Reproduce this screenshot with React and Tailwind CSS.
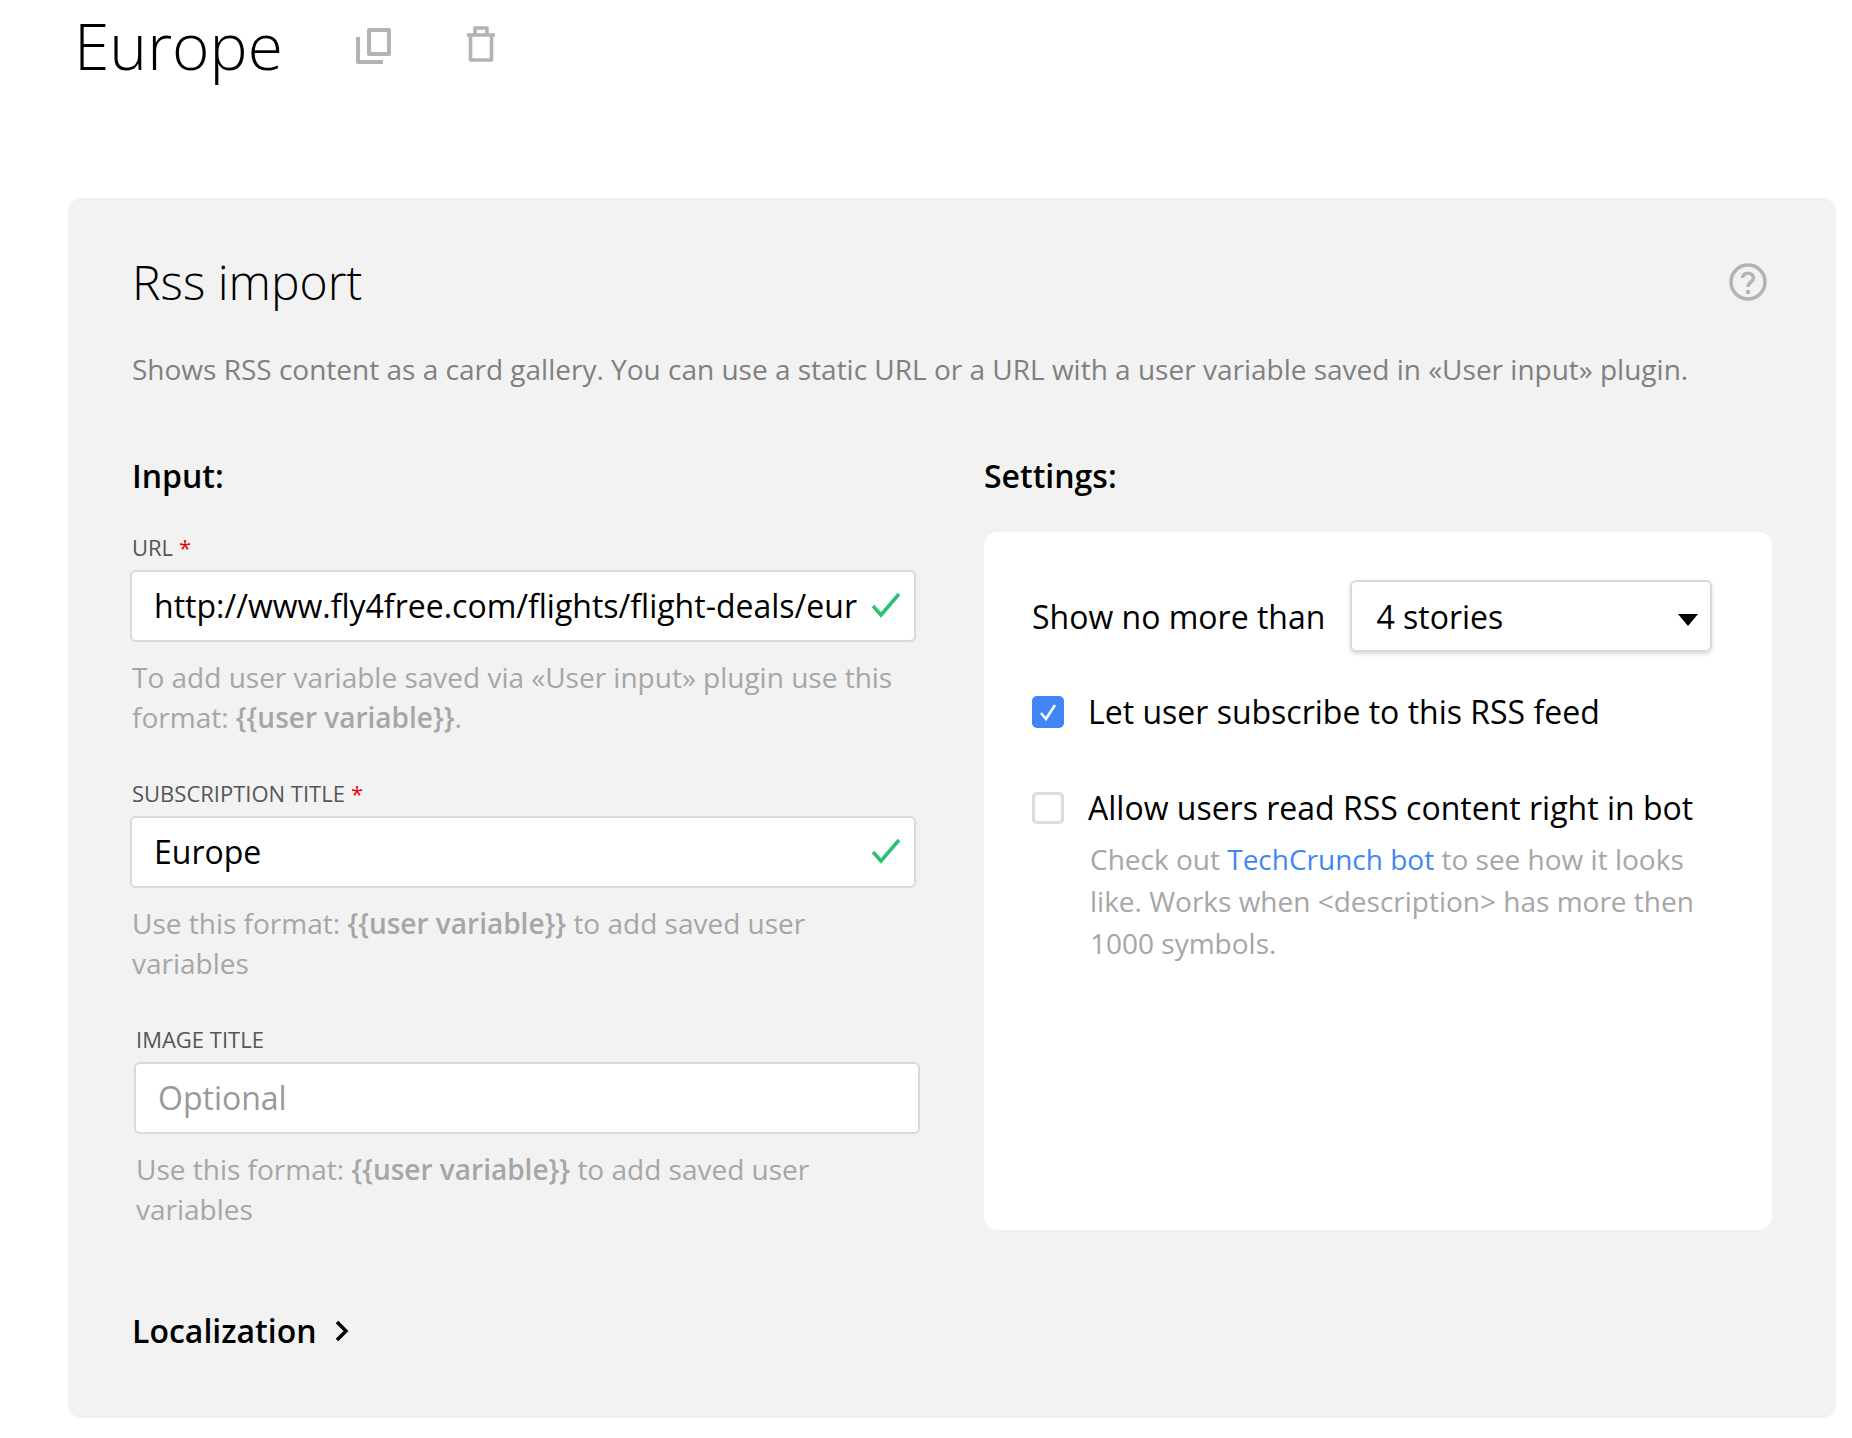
import React from 'react';

const font = "font-['Open_Sans',sans-serif]";

const GreenCheck = () => (
  <svg width="30" height="26" viewBox="0 0 30 26" fill="none" className="shrink-0 -mt-[3px]">
    <path d="M2 14 L10 23 L28 2" stroke="#2ac275" strokeWidth="3.6" />
  </svg>
);

const Field = ({ label, required, value, placeholder, check, children, className = '' }) => (
  <div className={className}>
    <div className="h-[28px] text-[22px] leading-[28px] text-[#555555]">
      {label}
      {required && <span className="ml-[6px] text-[#f00000]">*</span>}
    </div>
    <div className="mt-[9px] -ml-[2px] mr-[1px] h-[72px] flex items-center justify-between pl-[22px] pr-[13px] bg-white border-2 border-[#d9d9d9] rounded-[6px] text-[32px]">
      {value ? <span className="text-black whitespace-nowrap">{value}</span> : <span className="text-[#999999]">{placeholder}</span>}
      {check && <GreenCheck />}
    </div>
    <p className="mt-[15px] text-[28px] leading-[40px] text-[#a6a6a6]">{children}</p>
  </div>
);

const App = () => {
  return (
    <div className={`${font} w-[1852px] h-[1438px] bg-white overflow-hidden`}>
      {/* Header */}
      <div className="h-[198px] pl-[74px] flex items-start">
        <h1 className="mt-[6px] text-[64px] leading-[80px] font-light text-black">Europe</h1>
        <div className="ml-[73px] mt-[26px] flex items-start gap-[76px]">
          <svg width="35" height="36" viewBox="0 0 35 36" fill="none" stroke="#b3b3b3" strokeWidth="4" strokeLinejoin="round" className="mt-[2px]">
            <rect x="13" y="2" width="20" height="24" />
            <path d="M2 9 V34 H27" />
          </svg>
          <svg width="28" height="36" viewBox="0 0 28 36" fill="none" stroke="#b3b3b3" strokeWidth="3.6" strokeLinejoin="round">
            <path d="M0 9 H28" />
            <path d="M8 8 V2 H20 V8" />
            <path d="M3.5 9 V34 H24.5 V9" />
          </svg>
        </div>
      </div>

      {/* Panel */}
      <div className="ml-[68px] w-[1768px] h-[1220px] bg-[#f2f2f2] rounded-[14px] pl-[64px] pt-[50px]">
        <div className="flex items-center justify-between w-[1635px]">
          <h2 className="text-[48px] leading-[68px] font-light text-black">Rss import</h2>
          <svg width="38" height="38" viewBox="0 0 38 38" fill="none">
            <circle cx="19" cy="19" r="17" stroke="#b3b3b3" strokeWidth="3.5" />
            <path d="M13.5 15 C13.5 8.5 24.5 8.5 24.5 15 C24.5 19 19 19 19 24" stroke="#b3b3b3" strokeWidth="3.5" />
            <circle cx="19" cy="29" r="2.2" fill="#b3b3b3" />
          </svg>
        </div>
        <p className="mt-[33px] text-[28px] leading-[40px] text-[#808080] whitespace-nowrap">
          Shows RSS content as a card gallery. You can use a static URL or a URL with a user variable saved in «User input» plugin.
        </p>

        <div className="mt-[65px] flex">
          {/* Input column */}
          <div className="w-[852px]">
            <h3 className="text-[32px] leading-[44px] font-semibold text-black">Input:</h3>
            <Field className="mt-[35px] w-[785px]" label="URL" required value="http://www.fly4free.com/flights/flight-deals/eur" check>
              To add user variable saved via «User input» plugin use this format: <b className="font-semibold">{'{{user variable}}'}</b>.
            </Field>
            <Field className="mt-[42px] w-[785px]" label="SUBSCRIPTION TITLE" required value="Europe" check>
              Use this format: <b className="font-semibold">{'{{user variable}}'}</b> to add saved user variables
            </Field>
            <Field className="mt-[42px] ml-[4px] w-[785px]" label="IMAGE TITLE" placeholder="Optional">
              Use this format: <b className="font-semibold">{'{{user variable}}'}</b> to add saved user variables
            </Field>
            <div className="mt-[80px] flex items-center gap-[18px] text-[32px] leading-[44px] font-semibold text-black">
              Localization
              <svg width="14" height="22" viewBox="0 0 14 22" fill="none" stroke="black" strokeWidth="3.5">
                <path d="M2 2 L11 11 L2 20" />
              </svg>
            </div>
          </div>

          {/* Settings column */}
          <div className="w-[788px]">
            <h3 className="text-[32px] leading-[44px] font-semibold text-black">Settings:</h3>
            <div className="mt-[34px] h-[698px] bg-white rounded-[14px] pl-[48px] pt-[48px]">
              <div className="flex items-center">
                <span className="text-[32px] leading-[44px] text-black pt-[2px]">Show no more than</span>
                <div className="ml-[25px] w-[362px] h-[72px] flex items-center justify-between pl-[24px] pr-[12px] border-2 border-[#d9d9d9] rounded-[6px] shadow-[0_2px_4px_rgba(0,0,0,0.15)] text-[32px] text-black">
                  <span className="pt-[1px]">4 stories</span>
                  <svg width="20" height="12" viewBox="0 0 20 12" fill="black" className="mt-[7px]"><path d="M0 0 H20 L10 12 Z" /></svg>
                </div>
              </div>
              <div className="mt-[38px] flex items-center gap-[24px]">
                <span className="w-[32px] h-[32px] bg-[#3f87f5] rounded-[5px] flex items-center justify-center">
                  <svg width="18" height="18" viewBox="0 0 18 18" fill="none" stroke="white" strokeWidth="2.5">
                    <path d="M2 10 L7 16 L16 2" />
                  </svg>
                </span>
                <span className="text-[32px] leading-[44px] text-black">Let user subscribe to this RSS feed</span>
              </div>
              <div className="mt-[52px] flex items-center gap-[24px]">
                <span className="w-[32px] h-[32px] bg-white border-[3px] border-[#dcdcdc] rounded-[5px]"></span>
                <span className="text-[32px] leading-[44px] text-black">Allow users read RSS content right in bot</span>
              </div>
              <p className="mt-[8px] ml-[58px] w-[620px] text-[28px] leading-[42px] text-[#a6a6a6]">
                Check out <span className="text-[#3f87f5]">TechCrunch bot</span> to see how it looks like. Works when &lt;description&gt; has more then 1000 symbols.
              </p>
            </div>
          </div>
        </div>
      </div>
    </div>
  );
};

export default App;
